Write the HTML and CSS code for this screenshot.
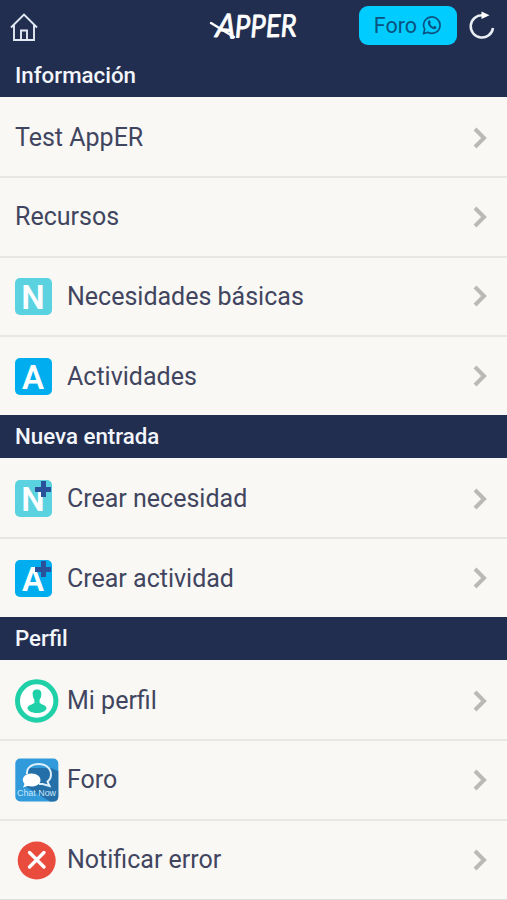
FILE: index.html
```html
<!DOCTYPE html>
<html lang="es">
<head>
<meta charset="utf-8">
<title>AppER</title>
<link rel="stylesheet" href="styles.css">
</head>
<body>
	<header class="topbar">
		<a class="btn-home">
			<svg width="30" height="30" viewBox="0 0 30 30" fill="none" stroke="#e3e9f4" stroke-width="1.9">
				<path d="M2 15.500L15 2.500L28 15.500M5 13V28H25V13M12 28V18.500H18V28"/>
			</svg>
		</a>
		<svg class="logo" width="100" height="54" viewBox="0 0 100 54">
			<path d="M7 23L30 37" stroke="#fff" stroke-width="2.400" stroke-linecap="round"/>
			<text class="logo-text" transform="translate(11 37) rotate(5)" font-size="34" textLength="20" lengthAdjust="spacingAndGlyphs">A</text>
			<text class="logo-text" transform="translate(31 37.500) rotate(-1)" font-size="31" textLength="62" lengthAdjust="spacingAndGlyphs">PPER</text>
		</svg>
		<a class="btn-foro">Foro
			<svg width="20" height="20" viewBox="0 0 20 20">
				<path d="M1.500 18.600L2.700 14.200A8.200 8.200 0 1 1 5.800 17.300Z" fill="none" stroke="#0a5380" stroke-width="1.700" stroke-linejoin="round"/>
				<path d="M6.600 5.400Q7.600 4.800 8.100 5.800L8.800 7.600L8 8.800Q9.200 11 11.200 11.900L12.400 10.800L14.600 11.900Q14.500 14.200 12.400 14.300Q8.200 13.800 6.100 9.200Q5.200 6.800 6.600 5.400Z" fill="#0a5380"/>
			</svg>
		</a>
		<a class="btn-reload">
			<svg width="28" height="30" viewBox="0 0 28 30">
				<path d="M14.500 5.200A11.200 11.200 0 1 0 25 18" fill="none" stroke="#e9eef3" stroke-width="2.500"/>
				<path d="M13.500 1.500L21.500 5.200L13.500 9Z" fill="#fff"/>
			</svg>
		</a>
	</header>

	<h2 class="list-title">Información</h2>
	<ul class="list">
		<li><span class="label">Test AppER</span><svg class="arrow" viewBox="0 0 14 22"><path d="M2 2L11 11L2 20"/></svg></li>
		<li><span class="label">Recursos</span><svg class="arrow" viewBox="0 0 14 22"><path d="M2 2L11 11L2 20"/></svg></li>
		<li>
			<span class="icon"><span class="tile tile-n">N</span></span>
			<span class="label">Necesidades básicas</span><svg class="arrow" viewBox="0 0 14 22"><path d="M2 2L11 11L2 20"/></svg>
		</li>
		<li>
			<span class="icon"><span class="tile tile-a">A</span></span>
			<span class="label">Actividades</span><svg class="arrow" viewBox="0 0 14 22"><path d="M2 2L11 11L2 20"/></svg>
		</li>
	</ul>

	<h2 class="list-title">Nueva entrada</h2>
	<ul class="list">
		<li>
			<span class="icon"><span class="tile tile-n plus">N</span></span>
			<span class="label">Crear necesidad</span><svg class="arrow" viewBox="0 0 14 22"><path d="M2 2L11 11L2 20"/></svg>
		</li>
		<li>
			<span class="icon"><span class="tile tile-a plus">A</span></span>
			<span class="label">Crear actividad</span><svg class="arrow" viewBox="0 0 14 22"><path d="M2 2L11 11L2 20"/></svg>
		</li>
	</ul>

	<h2 class="list-title">Perfil</h2>
	<ul class="list list-last">
		<li>
			<span class="icon">
				<svg width="44" height="44" viewBox="0 0 44 44">
					<circle cx="21.700" cy="22" r="19.200" fill="#fff" stroke="#20d0a8" stroke-width="5"/>
					<path d="M22 10.500C25.200 10.500 26.700 12.500 26.300 15.500C26.200 18 25.400 19.600 24.600 20.800V24C27.500 25.800 31.400 26.200 31.600 29.500C29.500 35.500 14.500 35.500 12.400 29.500C12.600 26.200 16.500 25.800 19.400 24V20.800C18.600 19.600 17.800 18 17.700 15.500C17.300 12.500 18.800 10.500 22 10.500Z" fill="#20d0a8"/>
				</svg>
			</span>
			<span class="label">Mi perfil</span><svg class="arrow" viewBox="0 0 14 22"><path d="M2 2L11 11L2 20"/></svg>
		</li>
		<li>
			<span class="icon">
				<svg width="44" height="44" viewBox="0 0 44 44">
					<rect x=".3" y=".5" width="43" height="43" rx="5" fill="#309ada"/>
					<path d="M36 10L43.300 13V38.500Q43.300 43.500 38.300 43.500H35L10 28L14 10Z" fill="#246fa8"/>
					<path d="M12 16C11.500 9.500 17 6 23.500 6C31 6 36 10.500 36 16.500C36 20 34.500 22 32.500 23.600L34.500 28L27.500 26H24" fill="none" stroke="#dceffb" stroke-width="2"/>
					<path d="M16.500 15.500C22 15.500 25.500 18.500 25.500 22C25.500 26 21.500 28.500 16.500 28.500L12.500 28L8 29.500L9.500 26C5.500 21 9 15.500 16.500 15.500Z" fill="#fff"/>
					<text class="chat-text" x="2" y="38" textLength="39" lengthAdjust="spacingAndGlyphs">Chat Now</text>
				</svg>
			</span>
			<span class="label">Foro</span><svg class="arrow" viewBox="0 0 14 22"><path d="M2 2L11 11L2 20"/></svg>
		</li>
		<li>
			<span class="icon">
				<svg width="44" height="44" viewBox="0 0 44 44">
					<circle cx="21.700" cy="22.500" r="19" fill="#e94b3c"/>
					<path d="M14.500 14.500L29 29M29 14.500L14.500 29" stroke="#fff" stroke-width="3.400" stroke-linecap="round"/>
				</svg>
			</span>
			<span class="label">Notificar error</span><svg class="arrow" viewBox="0 0 14 22"><path d="M2 2L11 11L2 20"/></svg>
		</li>
	</ul>
</body>
</html>
```
FILE: styles.css
```css
body{
	margin:0;
	background:#f9f8f4;
	font-family:Roboto, sans-serif;
	color:#41455f;
}
.topbar{
	display:flex;
	align-items:flex-start;
	box-sizing:border-box;
	height:54px;
	padding:0 11px 0 9px;
	background:#222e50;
}
.topbar svg{
	display:block;
}
.btn-home{
	margin-top:12px;
}
.logo{
	margin-left:165px;
	overflow:visible;
}
.logo-text{
	font-family:Lato, sans-serif;
	font-style:italic;
	font-weight:400;
	fill:#fff;
	stroke:#fff;
	stroke-width:.8;
	stroke-linejoin:round;
}
.btn-foro{
	display:flex;
	align-items:center;
	justify-content:center;
	gap:5px;
	box-sizing:border-box;
	width:98px;
	height:39px;
	margin:6px 0 0 55px;
	padding-bottom:1px;
	border-radius:9px;
	background:#00ccff;
	color:#0a5380;
	font-size:21.5px;
}
.btn-reload{
	margin:10px 0 0 11px;
}
.list-title{
	box-sizing:border-box;
	height:43px;
	margin:0;
	padding-left:15px;
	background:#222e50;
	color:#f3f6fb;
	font-size:22.3px;
	font-weight:500;
	line-height:42px;
}
.list{
	margin:0;
	padding:0;
	list-style:none;
}
.list li{
	display:flex;
	align-items:center;
	box-sizing:border-box;
	height:79.5px;
	padding:0 20px 0 15px;
	border-top:2px solid #e7e7e4;
}
.list li:first-child{
	height:79px;
	padding-top:2px;
	border-top:none;
}
.list li:last-child{
	height:80px;
}
.list-last{
	border-bottom:1px solid #dededc;
}
.icon{
	width:52px;
}
.icon svg{
	display:block;
}
.label{
	flex:1;
	font-size:25px;
}
.arrow{
	width:14px;
	height:22px;
	fill:none;
	stroke:#b9b9b7;
	stroke-width:4;
}
.tile{
	display:block;
	position:relative;
	width:37px;
	height:37px;
	margin-left:-.5px;
	border-radius:5px;
	color:#fff;
	font-size:33px;
	font-weight:600;
	line-height:39px;
	text-align:center;
}
.tile-n{
	background:#5bd2e0;
}
.tile-a{
	background:#00aeef;
}
/* cruz azul de "crear" */
.plus:before,
.plus:after{
	content:"";
	position:absolute;
	background:#29529a;
}
.plus:before{
	top:7px;
	right:1px;
	width:16px;
	height:5px;
}
.plus:after{
	top:1px;
	right:6px;
	width:5px;
	height:16px;
}
.chat-text{
	font-family:"Liberation Sans", sans-serif;
	font-size:9px;
	fill:#c9e6f8;
}
```
